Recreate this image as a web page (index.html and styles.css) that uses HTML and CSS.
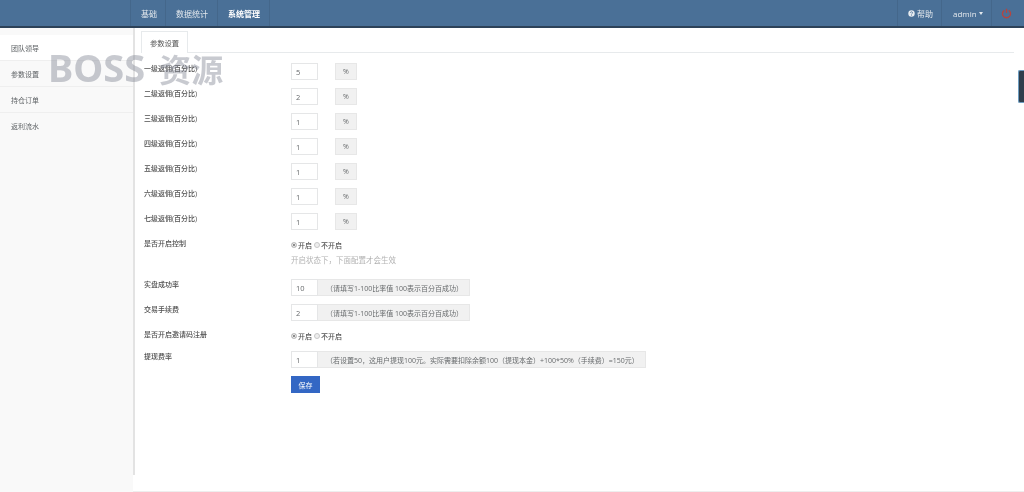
FILE: index.html
```html
<!DOCTYPE html>
<html lang="zh">
<head>
<meta charset="utf-8">
<title>参数设置</title>
<link rel="stylesheet" href="styles.css">
</head>
<body>
<header class="topbar">
  <nav class="nav-left">
    <a class="nav-item nav-short">基础</a>
    <a class="nav-item">数据统计</a>
    <a class="nav-item nav-active">系统管理</a>
  </nav>
  <nav class="nav-right">
    <a class="nav-item nav-help">
      <svg class="help-icon" viewBox="0 0 12 12"><circle cx="6" cy="6" r="5.5" fill="#e6ebf0"/><path d="M4.2 4.8a1.8 1.6 0 1 1 2.6 1.4c-.6.3-.8.6-.8 1.1" fill="none" stroke="#4a7097" stroke-width="1.4"/><rect x="5.3" y="8.2" width="1.4" height="1.4" fill="#4a7097"/></svg>
      帮助
    </a>
    <a class="nav-item nav-admin">admin<span class="caret"></span></a>
    <a class="nav-item nav-power">
      <svg class="power-icon" viewBox="0 0 12 12"><path d="M3.6 2.6a4.4 4.4 0 1 0 4.8 0" fill="none" stroke="#b5443f" stroke-width="1.5"/><path d="M6 .8v4.6" stroke="#b5443f" stroke-width="1.5"/></svg>
    </a>
  </nav>
</header>
<div class="page">
  <aside class="sidebar">
    <a class="side-item side-current">团队领导</a>
    <a class="side-item">参数设置</a>
    <a class="side-item">持仓订单</a>
    <a class="side-item side-last">返利流水</a>
  </aside>
  <main class="content">
    <div class="tabs"><span class="tab">参数设置</span></div>
    <form class="form">
      <div class="row"><label class="lbl">一级返佣(百分比)</label><input class="inp" value="5"><span class="unit">%</span></div>
      <div class="row"><label class="lbl">二级返佣(百分比)</label><input class="inp" value="2"><span class="unit">%</span></div>
      <div class="row"><label class="lbl">三级返佣(百分比)</label><input class="inp" value="1"><span class="unit">%</span></div>
      <div class="row"><label class="lbl">四级返佣(百分比)</label><input class="inp" value="1"><span class="unit">%</span></div>
      <div class="row"><label class="lbl">五级返佣(百分比)</label><input class="inp" value="1"><span class="unit">%</span></div>
      <div class="row"><label class="lbl">六级返佣(百分比)</label><input class="inp" value="1"><span class="unit">%</span></div>
      <div class="row"><label class="lbl">七级返佣(百分比)</label><input class="inp" value="1"><span class="unit">%</span></div>
      <div class="row row-control"><label class="lbl">是否开启控制</label>
        <div class="radios"><span class="radio radio-on"></span><span class="radio-text">开启</span><span class="radio"></span><span>不开启</span></div></div>
      <p class="hint">开启状态下&#xFF0C;下面配置才会生效</p>
      <div class="row"><label class="lbl">实盘成功率</label><div class="group"><input class="inp" value="10"><span class="addon addon-a">&#xFF08;请填写1-100比率值 100表示百分百成功&#xFF09;</span></div></div>
      <div class="row"><label class="lbl">交易手续费</label><div class="group"><input class="inp" value="2"><span class="addon addon-a">&#xFF08;请填写1-100比率值 100表示百分百成功&#xFF09;</span></div></div>
      <div class="row row-invite"><label class="lbl">是否开启邀请码注册</label>
        <div class="radios"><span class="radio radio-on"></span><span class="radio-text">开启</span><span class="radio"></span><span>不开启</span></div></div>
      <div class="row"><label class="lbl">提现费率</label><div class="group"><input class="inp" value="1"><span class="addon addon-b">&#xFF08;若设置50&#xFF0C;这用户提现100元。实际需要扣除余额100&#xFF08;提现本金&#xFF09;+100*50%&#xFF08;手续费&#xFF09;=150元&#xFF09;</span></div></div>
      <div class="row-save"><button class="save" type="button">保存</button></div>
    </form>
  </main>
</div>
<div class="watermark">BOSS<span class="wm-cjk">资源</span></div>
<div class="side-widget"></div>
</body>
</html>
```
FILE: styles.css
```css
* { box-sizing: border-box; }
html, body { margin: 0; height: 492px; overflow: hidden; }
body {
  position: relative;
  background: #fff;
  color: #676a6c;
  font-family: "Open Sans", "Noto Sans CJK SC", sans-serif;
  font-size: 7px;
  filter: blur(0.4px);
}
.topbar {
  height: 28px;
  display: flex;
  justify-content: space-between;
  padding-left: 130px;
  background: #4a7097;
  border-bottom: 2px solid #2d4258;
  color: #e4e9ee;
}
.nav-left, .nav-right { display: flex; }
.nav-item {
  display: flex;
  align-items: center;
  gap: 2px;
  height: 26px;
  width: 52px;
  padding-left: 10px;
  border-right: 1px solid #44678b;
  font-size: 8px;
}
.nav-short { width: 36px; border-left: 1px solid #44678b; padding-left: 10px; }
.nav-active { color: #fff; font-weight: 600; }
.nav-help { width: 45px; padding-left: 10px; border-left: 1px solid #44678b; }
.nav-admin { width: 50px; padding-left: 11px; }
.nav-power { width: 32px; padding-left: 9px; border-right: 0; }
.help-icon { width: 7px; height: 7px; }
.power-icon { width: 11px; height: 11px; }
.caret {
  margin-left: 0;
  border-top: 3px solid #e4e9ee;
  border-left: 2.5px solid transparent;
  border-right: 2.5px solid transparent;
}
.page { display: flex; height: 464px; }
.sidebar {
  flex: 0 0 133px;
  padding-top: 7px;
  background: #f9f9f9;
}
.side-item {
  display: flex;
  align-items: center;
  height: 26px;
  padding-left: 11px;
  border-bottom: 1px solid #efefef;
  color: #5f6366;
}
.side-current { background: #fff; }
.side-last { border-bottom: 0; }
.content {
  position: relative;
  width: 891px;
  height: 464px;
  padding: 3px 10px 0 8px;
  background: #fff;
  border-bottom: 1px solid #eeeeee;
}
.content::before {
  content: "";
  position: absolute;
  left: 0;
  top: 0;
  width: 2px;
  height: 447px;
  background: #e3e3e3;
}
.tabs { height: 22px; border-bottom: 1px solid #e7eaec; }
.tab {
  display: inline-flex;
  align-items: center;
  justify-content: center;
  width: 47px;
  height: 22px;
  background: #fff;
  border: 1px solid #e7eaec;
  border-bottom: 0;
  color: #555;
  font-size: 7.3px;
}
.form { padding: 10px 0 0 3px; }
.row { display: flex; height: 25px; align-items: flex-start; }
.lbl { width: 147px; flex: none; color: #505050; font-weight: 500; line-height: 11px; }
.inp {
  width: 27px;
  height: 17px;
  padding: 0 0 0 4px;
  border: 1px solid #e5e6e7;
  border-radius: 0;
  background: #fff;
  color: #676a6c;
  font: inherit;
  font-size: 7.5px;
  outline: 0;
}
.unit {
  display: flex;
  align-items: center;
  justify-content: center;
  width: 22px;
  height: 17px;
  margin-left: 17px;
  background: #f1f1f1;
  border: 1px solid #e7e7e7;
}
.group { display: flex; }
.addon {
  display: flex;
  align-items: center;
  height: 17px;
  padding-left: 8px;
  background: #f1f1f1;
  border: 1px solid #e7e7e7;
  border-left: 0;
  white-space: nowrap;
}
.addon-a { width: 152px; }
.addon-b { width: 328px; }
.row-control { height: 17px; }
.row-invite { height: 22px; }
.radios { display: flex; align-items: center; height: 11px; margin-top: 1px; color: #555; font-weight: 500; }
.radio {
  width: 6px;
  height: 6px;
  margin-right: 1px;
  border-radius: 50%;
  border: 1px solid #c8c8c8;
  background: #eee;
}
.radio-text { margin-right: 2px; }
.radio-on { background: #666; box-shadow: inset 0 0 0 1px #fff; }
.hint { margin: 0 0 0 147px; height: 24px; color: #b3b3b3; font-size: 7.5px; line-height: 11px; }
.row-save { padding-left: 147px; }
.save {
  display: block;
  width: 29px;
  height: 17px;
  padding: 0;
  background: #3367c4;
  border: 0;
  color: #fff;
  font: inherit;
}
.watermark {
  position: absolute;
  left: 48px;
  top: 41px;
  font-family: "Noto Sans", "Noto Sans CJK SC", sans-serif;
  font-size: 38px;
  font-weight: 700;
  color: rgba(125, 128, 142, .42);
  white-space: nowrap;
}
.wm-cjk { margin-left: 14px; font-size: 32px; }
.side-widget {
  position: absolute;
  right: 0;
  top: 70px;
  width: 6px;
  height: 33px;
  background: #2f3e4c;
  border: 1px solid #6d9cc0;
  border-right: 0;
  border-radius: 2px 0 0 2px;
}
```
